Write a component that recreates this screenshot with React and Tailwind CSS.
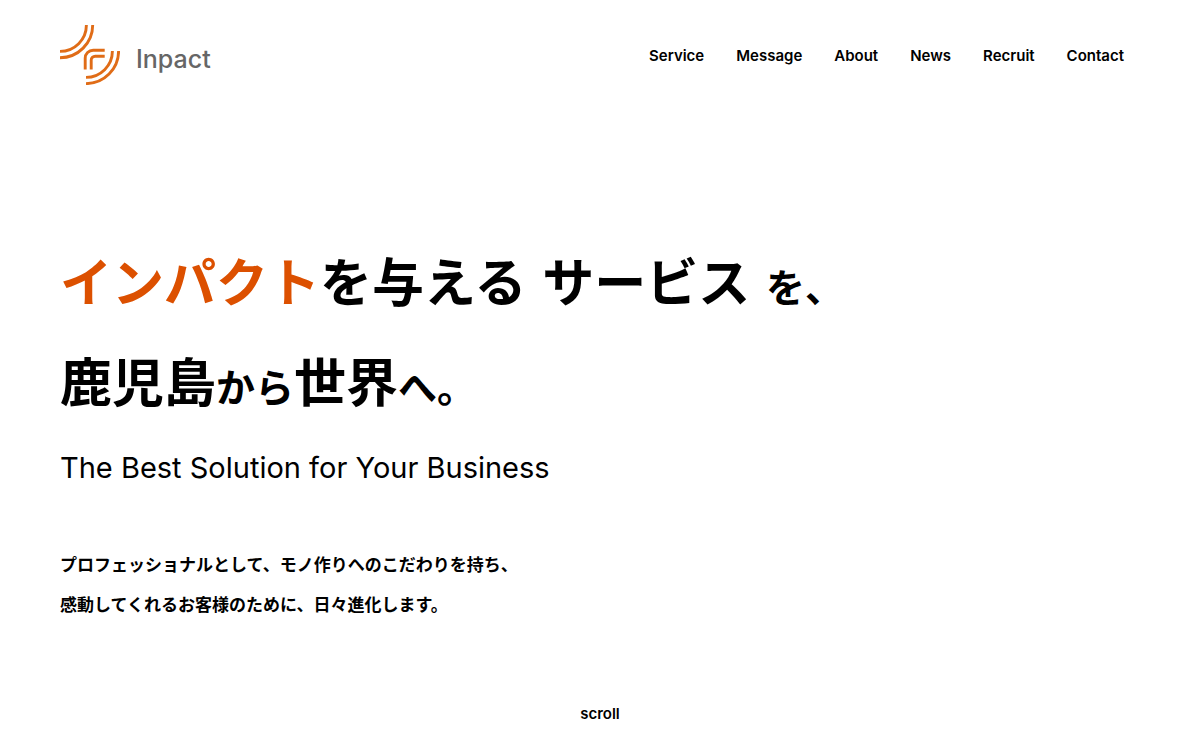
import React from 'react';

const navItems = ['Service', 'Message', 'About', 'News', 'Recruit', 'Contact'];

const LogoMark = () => (
    <svg viewBox="0 0 60 60" className="h-15 w-15" fill="none" stroke="#e06c17" strokeWidth="2.9" aria-hidden="true">
        <path d="M0 26.4A26.4 26.4 0 0 0 26.4 0" />
        <path d="M0 32.7A32.7 32.7 0 0 0 32.7 0" />
        <path d="M25.2 44.5V33.2A8 8 0 0 1 33.2 25.2H44.7" />
        <path d="M31.2 44.5V35.2A4 4 0 0 1 35.2 31.2H44.7" />
        <path d="M52.4 26A26.4 26.4 0 0 1 26 52.4" />
        <path d="M58.6 26A32.6 32.6 0 0 1 26 58.6" />
    </svg>
);

const Header = () => (
    <header className="flex items-center justify-between pt-[25px] pl-15 pr-19">
        <a href="#top" className="flex items-center gap-4">
            <LogoMark />
            <span className="pt-2 text-[25px] leading-8 font-medium text-[#666666]">Inpact</span>
        </a>
        <nav aria-label="Main">
            <ul className="flex gap-8">
                {navItems.map((item) => (
                    <li key={item}>
                        <a href={`#${item.toLowerCase()}`} className="text-[15px] leading-6 font-semibold hover:text-[#dc5000]">
                            {item}
                        </a>
                    </li>
                ))}
            </ul>
        </nav>
    </header>
);

const App = () => {
    return (
        <div id="top" className="flex min-h-screen flex-col bg-white font-[Inter,'Noto_Sans_CJK_JP',sans-serif] text-black">
            <Header />

            <main className="px-15 pt-[145px]">
                <h1 className="font-['Noto_Sans_CJK_JP',sans-serif] text-[52px] leading-[100px] font-bold" lang="ja">
                    <span className="text-[#dc5000]">インパクト</span>を与える
                    <span className="mx-1"> サービス </span>
                    <span className="text-[39px] leading-none">を、</span>
                    <br />
                    鹿児島<span className="text-[39px] leading-none">から</span>世界
                    <span className="text-[39px] leading-none">へ。</span>
                </h1>
                <p className="mt-[18px] text-[29px] leading-10">The Best Solution for Your Business</p>
                <p className="mt-14 font-['Noto_Sans_CJK_JP',sans-serif] text-[17px] leading-10 font-bold" lang="ja">
                    プロフェッショナルとして、モノ作りへのこだわりを持ち、
                    <br />
                    感動してくれるお客様のために、日々進化します。
                </p>
            </main>

            <a href="#service" className="mx-auto mt-auto mb-6 text-[15px] leading-6 font-semibold">
                scroll
            </a>
        </div>
    );
};

export default App;
